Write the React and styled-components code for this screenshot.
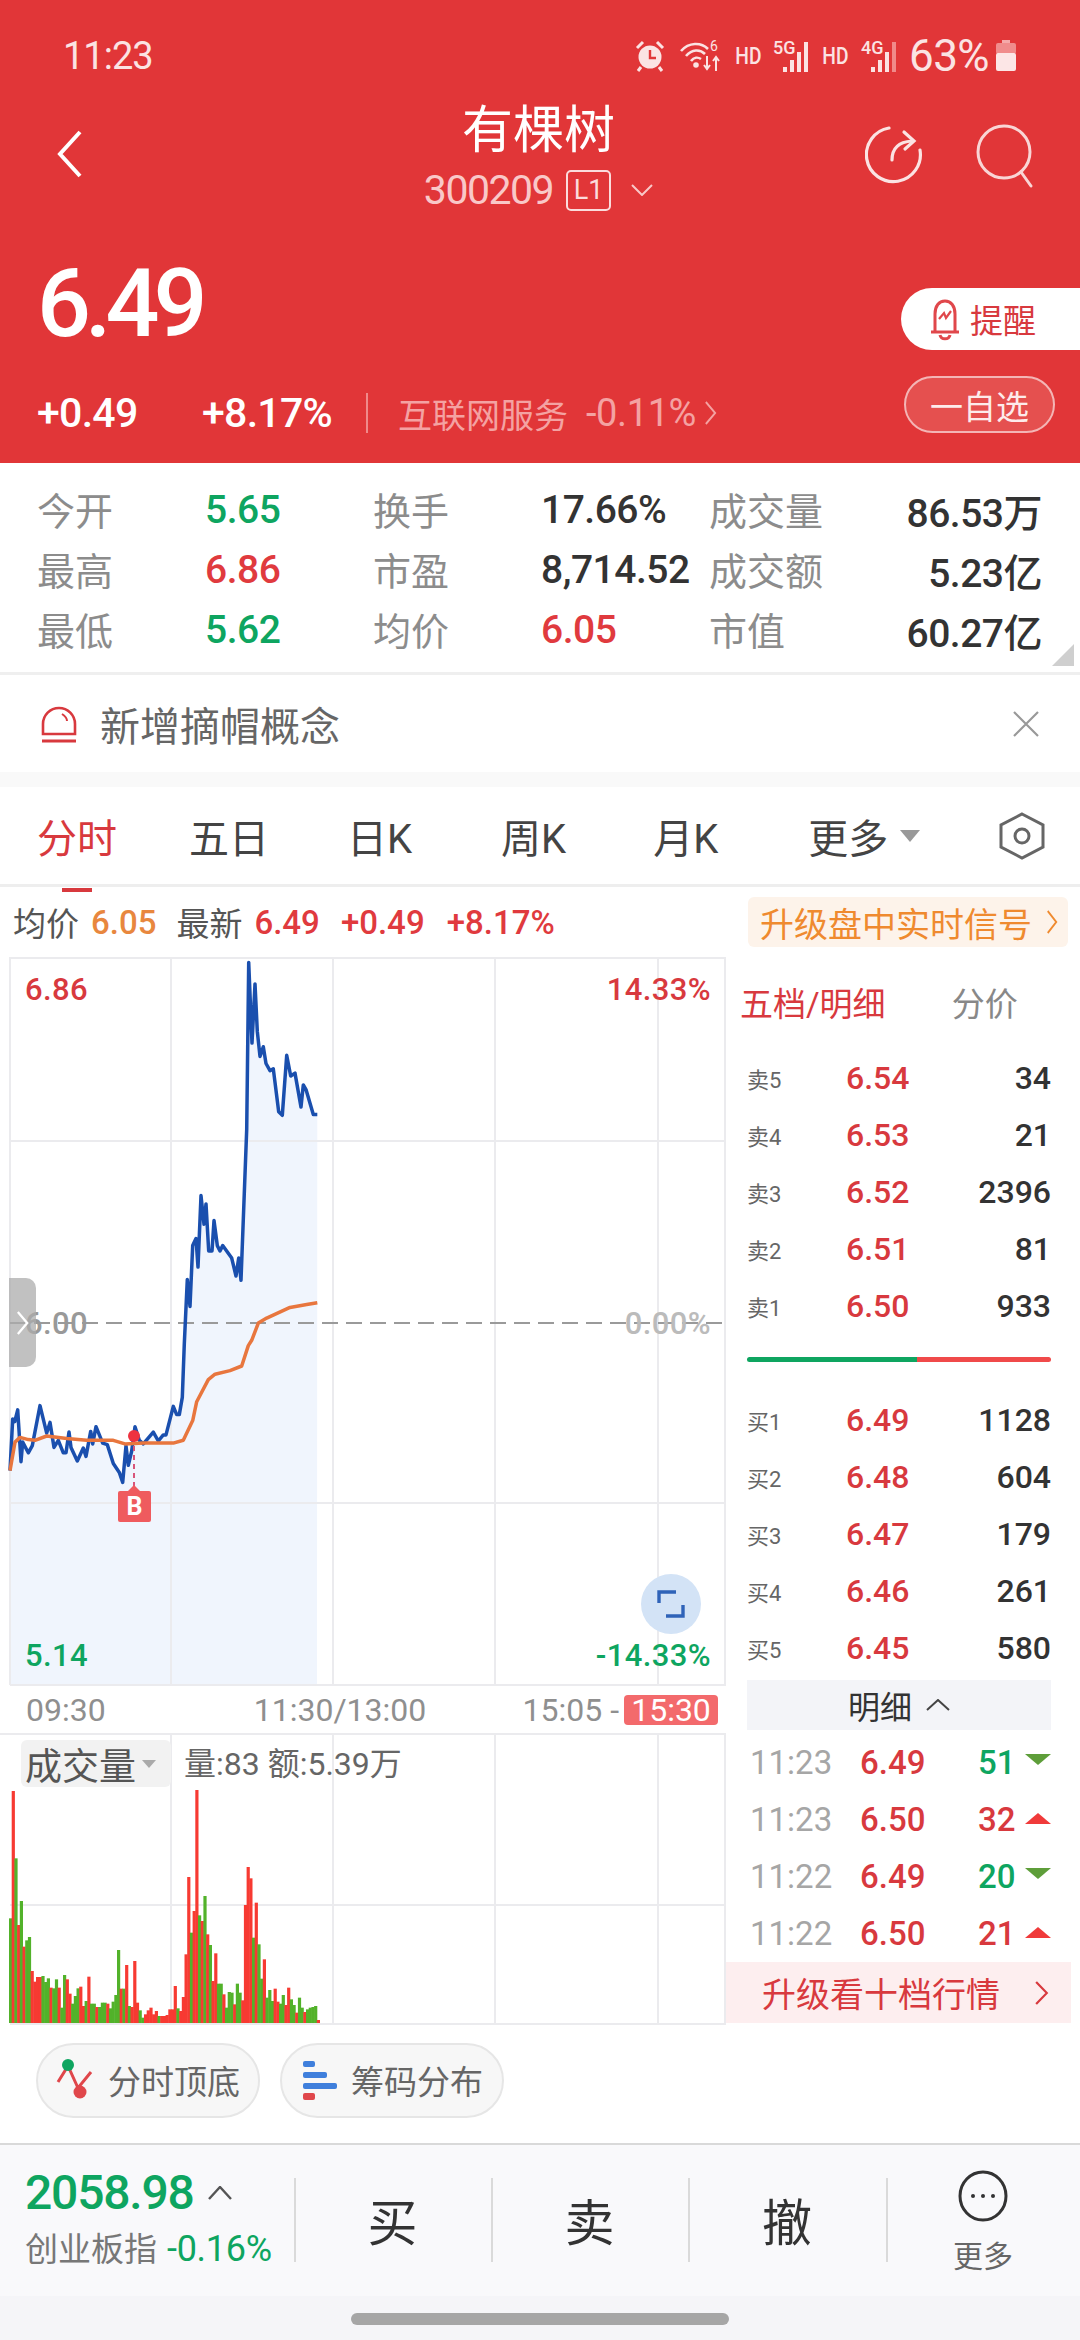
import styled, { createGlobalStyle } from "styled-components";
import { Fragment } from "react";

const RED = "#E03A3E";
const GREEN = "#0EA560";
const FONT = `Roboto, "Noto Sans CJK SC", sans-serif`;

const GlobalStyle = createGlobalStyle`
  html, body { margin: 0; padding: 0; background: #fff; }
  body { width: 1080px; font-family: ${FONT}; }
`;

const Page = styled.div`
  width: 1080px;
  height: 2340px;
  display: flex;
  flex-direction: column;
  overflow: hidden;
  background: #fff;
`;

/* red top part */
const Header = styled.header`
  height: 463px;
  background: #E13638;
  color: #fff;
  display: flex;
  flex-direction: column;
  flex: none;
`;
const StatusBar = styled.div`
  height: 112px;
  display: flex;
  align-items: center;
  padding: 0 63px;
  justify-content: space-between;
  box-sizing: border-box;
  color: #FBE3E3;
`;
const Clock = styled.span`
  font-size: 38px;
  letter-spacing: -1px;
`;
const StatusIcons = styled.div`
  display: flex;
  align-items: center;
`;
const HdMark = styled.span`
  font-size: 24px;
  font-weight: 500;
  margin: 0 9px 0 8px;
  transform: scaleX(.8);
`;
const Battery = styled.span`
  font-size: 44px;
  margin-left: 10px;
  letter-spacing: -.6px;
`;
const NavBar = styled.div`
  height: 103px;
  display: flex;
  align-items: flex-start;
  justify-content: space-between;
  padding: 0 45px 0 56px;
`;
const TitleBlock = styled.div`
  display: flex;
  flex-direction: column;
  align-items: center;
  margin-left: 128px;
`;
const Title = styled.div`
  font-size: 51px;
  line-height: 62px;
  color: #fff;
  margin-top: -12px;
`;
const CodeRow = styled.div`
  display: flex;
  align-items: center;
  margin-top: 6px;
  color: #F9C8C8;
  font-size: 41px;
  line-height: 44px;
  letter-spacing: -1.5px;
`;
const LevelBadge = styled.span`
  font-size: 27px;
  line-height: 37px;
  width: 45px;
  height: 41px;
  box-sizing: border-box;
  border: 2px solid #FBDCDC;
  border-radius: 5px;
  text-align: center;
  margin-left: 13px;
  color: #FBDCDC;
  letter-spacing: 0;
`;
const NavIcons = styled.div`
  display: flex;
  gap: 50px;
  align-items: flex-start;
  margin-top: 12px;
`;
const QuoteRow = styled.div`
  flex: 1;
  display: flex;
  justify-content: space-between;
  position: relative;
`;
const QuoteLeft = styled.div`
  padding-left: 37px;
  display: flex;
  flex-direction: column;
`;
const BigPrice = styled.div`
  font-size: 95px;
  line-height: 90px;
  font-weight: 500;
  letter-spacing: -6px;
  margin-top: 44px;
`;
const ChangeRow = styled.div`
  display: flex;
  align-items: center;
  margin-top: 44px;
  height: 40px;
`;
const Change = styled.span`
  font-size: 41px;
  font-weight: 500;
  letter-spacing: -.7px;
  width: ${(p) => p.$w}px;
`;
const VDivider = styled.span`
  width: 2px;
  height: 40px;
  background: #F08A8A;
  margin-right: 30px;
`;
const Sector = styled.span`
  font-size: 34px;
  color: #F4A2A2;
  display: flex;
  align-items: center;
`;
const SectorPct = styled.span`
  font-size: 38px;
  letter-spacing: -.4px;
  margin: 0 8px 0 18px;
`;
const QuoteRight = styled.div`
  display: flex;
  flex-direction: column;
  align-items: flex-end;
`;
const AlertChip = styled.div`
  width: 179px;
  height: 62px;
  margin-top: 73px;
  background: #fff;
  border-radius: 31px 0 0 31px;
  display: flex;
  align-items: center;
  padding-left: 27px;
  box-sizing: border-box;
  color: #D8393E;
  font-size: 33px;
  gap: 8px;
`;
const WatchChip = styled.div`
  width: 151px;
  height: 57px;
  margin: 26px 25px 0 0;
  box-sizing: border-box;
  border: 2px solid #F4B5B5;
  background: #E5504F;
  border-radius: 29px;
  display: flex;
  align-items: center;
  justify-content: center;
  color: #FDEBEB;
  font-size: 33px;
`;

/* stat table */
const Stats = styled.div`
  height: 212px;
  flex: none;
  box-sizing: border-box;
  padding: 15px 38px 0 37px;
  border-bottom: 3px solid #EFEFEF;
  position: relative;
  display: grid;
  grid-template-columns: 168px 168px 168px 168px 124px 1fr;
  grid-auto-rows: 60px;
  align-items: center;
`;
const StatLabel = styled.span`
  font-size: 38px;
  color: #8C8C8C;
`;
const StatValue = styled.span`
  font-size: 39px;
  font-weight: 500;
  margin-top: 3px;
  color: ${(p) => p.$c || "#333"};
  white-space: nowrap;
  text-align: ${(p) => (p.$right ? "right" : "left")};
  letter-spacing: -.5px;
`;
const Corner = styled.span`
  position: absolute;
  right: 6px;
  bottom: 6px;
  width: 0;
  height: 0;
  border-left: 22px solid transparent;
  border-bottom: 22px solid #CFCFCF;
`;

/* notice line */
const Notice = styled.div`
  height: 97px;
  flex: none;
  display: flex;
  align-items: center;
  padding: 0 41px 0 40px;
  font-size: 40px;
  color: #666;
  gap: 22px;
  border-bottom: 15px solid #F9F9F9;
`;
const NoticeText = styled.span`
  flex: 1;
`;

/* period tabs */
const Tabs = styled.div`
  height: 100px;
  flex: none;
  box-sizing: border-box;
  border-bottom: 3px solid #EEE;
  display: flex;
  align-items: center;
  padding: 0 35px 0 37px;
  position: relative;
`;
const Tab = styled.span`
  font-size: 40px;
  flex: none;
  white-space: nowrap;
  color: ${(p) => (p.$on ? "#D8393E" : "#444")};
  position: relative;
  display: flex;
  align-items: center;
  margin-right: ${(p) => p.$gap || 0}px;
  &::after {
    content: "";
    display: ${(p) => (p.$on ? "block" : "none")};
    position: absolute;
    left: 25px;
    bottom: -27px;
    width: 30px;
    height: 4px;
    background: #D8393E;
  }
`;
const TabArrow = styled.i`
  width: 0;
  height: 0;
  border-left: 10px solid transparent;
  border-right: 10px solid transparent;
  border-top: 12px solid #999;
  margin-left: 12px;
`;
const TabIcon = styled.span`
  margin-left: auto;
  display: flex;
`;

/* line under tabs */
const InfoRow = styled.div`
  height: 70px;
  flex: none;
  display: flex;
  align-items: center;
  padding: 0 12px 0 13px;
  font-size: 33px;
  font-weight: 500;
`;
const InfoLabel = styled.span`
  color: #555;
  font-weight: 400;
  margin-right: 12px;
`;
const InfoValue = styled.span`
  color: ${(p) => p.$c};
  margin-right: ${(p) => p.$gap}px;
`;
const Upgrade = styled.div`
  margin-left: auto;
  height: 50px;
  width: 320px;
  box-sizing: border-box;
  border-radius: 6px;
  background: #FDF3EA;
  color: #EF8A2F;
  font-weight: 400;
  font-size: 34px;
  display: flex;
  align-items: center;
  justify-content: space-between;
  padding: 0 10px 0 12px;
  white-space: nowrap;
`;

/* chart + order book */
const Market = styled.div`
  height: 1068px;
  flex: none;
  display: grid;
  grid-template-columns: 726px 354px;
`;
const ChartColumn = styled.div`
  display: flex;
  flex-direction: column;
`;
const PriceChart = styled.div`
  position: relative;
  height: 730px;
  flex: none;
  svg { display: block; }
`;
const ChartLabel = styled.span`
  position: absolute;
  font-size: 31px;
  line-height: 34px;
  font-weight: 500;
  letter-spacing: .4px;
  color: ${(p) => p.$c};
  top: ${(p) => p.$top}px;
  ${(p) => (p.$right ? "right: 15px;" : "left: 25px;")}
`;
const SideHandle = styled.div`
  position: absolute;
  left: 9px;
  top: 321px;
  width: 27px;
  height: 89px;
  border-radius: 0 10px 10px 0;
  background: rgba(172, 172, 172, .75);
  display: flex;
  align-items: center;
  justify-content: center;
`;
const ExpandButton = styled.div`
  position: absolute;
  left: 641px;
  top: 617px;
  width: 60px;
  height: 60px;
  border-radius: 50%;
  background: #D3E3F6;
  display: flex;
  align-items: center;
  justify-content: center;
`;
const BuyBadge = styled.div`
  position: absolute;
  left: 118px;
  top: 534px;
  width: 33px;
  height: 31px;
  background: #EF5B5E;
  border-radius: 2px;
  color: #fff;
  font-size: 25px;
  font-weight: 700;
  line-height: 32px;
  text-align: center;
  &::before {
    content: "";
    position: absolute;
    left: 10px;
    top: -6px;
    border-left: 6px solid transparent;
    border-right: 6px solid transparent;
    border-bottom: 6px solid #EF5B5E;
  }
`;
const TimeAxis = styled.div`
  height: 46px;
  flex: none;
  display: flex;
  align-items: center;
  font-size: 32px;
  color: #8F8F8F;
  padding-left: 26px;
  box-sizing: border-box;
  position: relative;
`;
const AxisMid = styled.span`
  margin-left: 148px;
`;
const AxisEnd = styled.span`
  margin-left: auto;
  margin-right: 8px;
  display: flex;
  align-items: center;
  gap: 5px;
`;
const CloseBadge = styled.span`
  background: #F36A6C;
  color: #fff;
  border-radius: 4px;
  height: 30px;
  line-height: 30px;
  width: 94px;
  text-align: center;
`;
const VolumeChart = styled.div`
  position: relative;
  height: 292px;
  flex: none;
  svg { display: block; }
`;
const VolumeTag = styled.div`
  position: absolute;
  left: 21px;
  top: 7px;
  width: 150px;
  height: 47px;
  border-radius: 6px;
  background: #F2F2F2;
  color: #555;
  font-size: 37px;
  display: flex;
  align-items: center;
  padding-left: 4px;
  box-sizing: border-box;
  gap: 6px;
`;
const VolumeArrow = styled.i`
  width: 0;
  height: 0;
  border-left: 7px solid transparent;
  border-right: 7px solid transparent;
  border-top: 8px solid #AAA;
`;
const VolumeInfo = styled.div`
  position: absolute;
  left: 184px;
  top: 14px;
  font-size: 32px;
  line-height: 34px;
  color: #666;
  white-space: nowrap;
`;

const Book = styled.div`
  display: flex;
  flex-direction: column;
  position: relative;
`;
const BookHead = styled.div`
  height: 92px;
  flex: none;
  display: flex;
  align-items: center;
  padding: 0 0 3px 14px;
  box-sizing: border-box;
  font-size: 33px;
  gap: 66px;
`;
const BookTab = styled.span`
  color: ${(p) => (p.$on ? "#D8393E" : "#888")};
`;
const BookRow = styled.div`
  height: 57px;
  flex: none;
  display: grid;
  grid-template-columns: 99px 90px 115px;
  margin-left: 21px;
  width: 304px;
  align-items: center;
`;
const BookLabel = styled.span`
  font-size: 22px;
  color: #666;
`;
const BookPrice = styled.span`
  font-size: 32px;
  font-weight: 500;
  color: #D8393E;
`;
const BookQty = styled.span`
  font-size: 32px;
  font-weight: 500;
  color: #333;
  text-align: right;
`;
const RatioBar = styled.div`
  height: 57px;
  flex: none;
  margin-left: 21px;
  width: 304px;
  display: flex;
  padding-top: 23px;
  box-sizing: border-box;
  & > i {
    height: 5px;
    display: block;
  }
`;
const RatioBuy = styled.i`
  width: 170px;
  background: #0EA560;
  border-radius: 3px 0 0 3px;
`;
const RatioSell = styled.i`
  flex: 1;
  background: #F04A4A;
  border-radius: 0 3px 3px 0;
`;
const DetailHead = styled.div`
  height: 50px;
  flex: none;
  margin: 4px 0 4px 21px;
  width: 304px;
  background: #F3F4F8;
  display: flex;
  align-items: center;
  justify-content: center;
  font-size: 32px;
  color: #333;
  gap: 14px;
`;
const DetailRow = styled.div`
  height: 57px;
  flex: none;
  margin-left: 24px;
  width: 301px;
  display: flex;
  align-items: center;
  font-size: 33px;
  font-weight: 500;
  position: relative;
`;
const DetailTime = styled.span`
  width: 110px;
  color: #A6A6A6;
  font-weight: 400;
`;
const DetailPrice = styled.span`
  width: 118px;
  color: #D8393E;
`;
const DetailVol = styled.span`
  color: ${(p) => (p.$up ? "#D8393E" : GREEN)};
`;
const Tick = styled.i`
  position: absolute;
  right: 0;
  width: 0;
  height: 0;
  border-left: 13px solid transparent;
  border-right: 13px solid transparent;
  ${(p) =>
    p.$up
      ? "border-bottom: 11px solid #F03A3A; margin-top: -2px;"
      : "border-top: 11px solid #5E9E3A; margin-top: -6px;"}
`;
const UpgradeStrip = styled.div`
  position: absolute;
  left: 0;
  top: 1005px;
  width: 345px;
  height: 61px;
  background: #FDEEEF;
  color: #D8393E;
  font-size: 34px;
  display: flex;
  align-items: center;
  justify-content: space-between;
  box-sizing: border-box;
  padding: 0 22px 0 36px;
`;

/* round feature chips */
const ChipRow = styled.div`
  height: 120px;
  flex: none;
  box-sizing: border-box;
  border-bottom: 2px solid #D9D9D9;
  display: flex;
  gap: 20px;
  padding: 0 0 8px 36px;
  align-items: center;
`;
const Chip = styled.div`
  width: 224px;
  height: 75px;
  box-sizing: border-box;
  border: 2px solid #E6E6E6;
  border-radius: 38px;
  background: #F7F7F7;
  color: #666;
  font-size: 33px;
  display: flex;
  align-items: center;
  justify-content: center;
  gap: 14px;
`;

/* bottom action bar */
const ActionBar = styled.div`
  height: 151px;
  flex: none;
  background: #F9F9FB;
  display: grid;
  grid-template-columns: 294px 197px 197px 198px 194px;
  box-sizing: border-box;
`;
const IndexBox = styled.div`
  padding: 24px 0 0 25px;
`;
const IndexValue = styled.div`
  font-size: 48px;
  line-height: 48px;
  font-weight: 500;
  color: ${GREEN};
  letter-spacing: -1.2px;
  display: flex;
  align-items: center;
  gap: 14px;
`;
const IndexSub = styled.div`
  font-size: 33px;
  line-height: 40px;
  color: #777;
  margin-top: 12px;
  white-space: nowrap;
`;
const IndexPct = styled.span`
  font-size: 36px;
  color: ${GREEN};
  margin-left: 10px;
  letter-spacing: -.3px;
`;
const ActionCell = styled.div`
  position: relative;
  display: flex;
  align-items: center;
  justify-content: center;
  font-size: 50px;
  color: #333;
  padding-bottom: 4px;
  box-sizing: border-box;
  &::before {
    content: "";
    position: absolute;
    left: 0;
    top: 33px;
    width: 2px;
    height: 84px;
    background: #DADADA;
  }
`;
const MoreCell = styled(ActionCell)`
  flex-direction: column;
  font-size: 30px;
  color: #666;
  gap: 10px;
  padding: 4px 0 0;
`;
const HomeBar = styled.div`
  flex: 1;
  background: #F5F5F8;
  display: flex;
  justify-content: center;
  padding-top: 17px;
  box-sizing: border-box;
`;
const HomePill = styled.div`
  width: 378px;
  height: 12px;
  border-radius: 6px;
  background: #A6A6A6;
`;

/* line data, read off the picture in crop pixels */
const priceLine = [[30,1455],[38,1310],[44,1318],[53,1285],[63,1430],[68,1375],[85,1405],[97,1385],[120,1273],[140,1350],[150,1320],[162,1390],[175,1370],[190,1405],[198,1405],[207,1347],[213,1390],[232,1428],[250,1392],[258,1415],[272,1345],[278,1380],[288,1332],[308,1378],[322,1382],[340,1435],[358,1460],[368,1488],[378,1385],[385,1440],[395,1400],[405,1332],[418,1370],[430,1380],[460,1347],[475,1372],[490,1355],[498,1355],[520,1275],[530,1298],[538,1298],[547,1250],[553,1100],[562,920],[570,995],[578,825],[588,805],[594,885],[603,685],[612,765],[618,708],[626,840],[636,840],[642,755],[652,825],[660,840],[668,825],[695,860],[708,910],[716,860],[723,922],[740,500],[746,32],[756,258],[765,92],[772,225],[780,295],[790,268],[798,315],[810,335],[820,330],[836,450],[847,460],[860,292],[872,350],[885,342],[903,437],[910,375],[918,388],[940,458],[952,458]];
const avgLine = [[30,1455],[45,1375],[60,1362],[85,1368],[105,1370],[140,1358],[200,1365],[260,1370],[340,1370],[375,1380],[430,1378],[520,1378],[550,1370],[578,1315],[590,1262],[625,1200],[645,1185],[690,1175],[725,1162],[745,1105],[755,1090],[775,1042],[800,1028],[870,998],[920,990],[952,985]];
const toPoints = (pts) => pts.map(([x, y]) => `${(x / 3).toFixed(1)},${(y / 2.8 - 6).toFixed(1)}`);

const volumeBars = "g712 r330 g532 r732 g660 r797 g778 g768 r870 r902 r888 r888 g885 g903 g892 r920 g922 g895 r920 g980 g882 r895 r938 g968 g945 g922 r917 r975 g960 r887 g968 g968 r978 g978 g965 g965 r968 g982 g962 g942 g807 r923 g923 r852 g975 r978 r840 r965 g988 g1010 r1000 r988 r980 r1000 r990 g1005 r1005 r1005 r1002 r985 r985 r915 g982 r990 r948 r820 r588 g755 r690 r327 g703 r720 g645 r760 g792 r900 r817 g908 g908 r940 g980 g933 g935 r970 g908 g935 r958 r672 r558 r592 g770 r665 g790 g893 r835 g950 g927 g960 r923 r962 g968 g942 r972 r920 g955 g972 r995 g950 g980 r993 g985 g980 g978 g975 r1017".split(" ");

const sells = [["卖5","6.54","34"],["卖4","6.53","21"],["卖3","6.52","2396"],["卖2","6.51","81"],["卖1","6.50","933"]];
const buys = [["买1","6.49","1128"],["买2","6.48","604"],["买3","6.47","179"],["买4","6.46","261"],["买5","6.45","580"]];
const trades = [["11:23","6.49","51",false],["11:23","6.50","32",true],["11:22","6.49","20",false],["11:22","6.50","21",true]];

const stats = [
  ["今开","5.65",GREEN,"换手","17.66%","#333","成交量","86.53万"],
  ["最高","6.86",RED,"市盈","8,714.52","#333","成交额","5.23亿"],
  ["最低","5.62",GREEN,"均价","6.05",RED,"市值","60.27亿"],
];

const Chevron = ({ w = 14, h = 24, color = "#fff", sw = 2.5, dir = "right" }) => (
  <svg width={w} height={h} viewBox="0 0 14 24" preserveAspectRatio="none" fill="none" stroke={color} strokeWidth={sw}>
    <path d={dir === "right" ? "M2 1 L12 12 L2 23" : "M12 1 L2 12 L12 23"} />
  </svg>
);

const Signal = ({ label }) => (
  <svg width="38" height="36" viewBox="0 0 38 36" style={{ overflow: "visible" }}>
    <text x="0" y="16" fontSize="18" fontWeight="500" fill="#FBE3E3" fontFamily="Roboto">{label}</text>
    <rect x="10" y="29" width="4" height="5" fill="#FBE3E3" />
    <rect x="17" y="22" width="4" height="12" fill="#FBE3E3" />
    <rect x="24" y="14" width="4" height="20" fill="#FBE3E3" />
    <rect x="31" y="4" width="4" height="30" fill={label === "4G" ? "#F08A8A" : "#FBE3E3"} />
  </svg>
);

export default function App() {
  return (
    <Page>
      <GlobalStyle />
      <Header>
        <StatusBar>
          <Clock>11:23</Clock>
          <StatusIcons>
            <svg width="30" height="32" viewBox="0 0 30 32">
              <circle cx="15" cy="17" r="11.5" fill="#FBE3E3" />
              <path d="M15 10v8h6" stroke="#E13638" strokeWidth="2.4" fill="none" />
              <path d="M2 8 L8 2 M28 8 L22 2" stroke="#FBE3E3" strokeWidth="3" />
              <path d="M6 27 L3 31 M24 27 L27 31" stroke="#FBE3E3" strokeWidth="3" />
            </svg>
            <svg width="44" height="34" viewBox="0 0 44 34" style={{ marginLeft: 15 }} fill="none" stroke="#FBE3E3" strokeWidth="2.6">
              <path d="M1 12 C9 3 21 3 28 10" />
              <path d="M6 17 C12 10 20 10 25 15" />
              <path d="M11 22 C14 18 18 18 21 20" />
              <circle cx="16" cy="26" r="1.5" fill="#FBE3E3" />
              <path d="M27 17v13M24 26l3 4 3-4M36 32V19M33 22l3-4 3 4" strokeWidth="2" />
              <text x="30" y="12" fontSize="14" fill="#FBE3E3" stroke="none" fontFamily="Roboto">6</text>
            </svg>
            <HdMark>HD</HdMark>
            <Signal label="5G" />
            <HdMark>HD</HdMark>
            <Signal label="4G" />
            <Battery>63%</Battery>
            <svg width="22" height="32" viewBox="0 0 22 32" style={{ marginLeft: 6 }}>
              <rect x="7" y="0" width="8" height="3" fill="#F5A9A9" />
              <rect x="1" y="3" width="20" height="11" rx="2" fill="#F08C8C" />
              <rect x="1" y="13" width="20" height="18" rx="2" fill="#FCE6E6" />
            </svg>
          </StatusIcons>
        </StatusBar>
        <NavBar>
          <span style={{ display: "flex", marginTop: 18 }}><Chevron w={28} h={48} dir="left" sw={2} /></span>
          <TitleBlock>
            <Title>有棵树</Title>
            <CodeRow>
              300209
              <LevelBadge>L1</LevelBadge>
              <svg width="22" height="12" viewBox="0 0 22 12" fill="none" stroke="#F9C8C8" strokeWidth="2" style={{ marginLeft: 20 }}>
                <path d="M1 1 L11 11 L21 1" />
              </svg>
            </CodeRow>
          </TitleBlock>
          <NavIcons>
            <svg width="60" height="62" viewBox="0 0 60 62" fill="none" stroke="#FBE3E3" strokeWidth="3.2" strokeLinecap="round">
              <path d="M24 4 A27 27 0 1 0 55 26" />
              <path d="M27 36 C27 25 33 18 47 17" />
              <path d="M39 8 L49 17 L40 25" />
            </svg>
            <svg width="60" height="64" viewBox="0 0 60 64" fill="none" stroke="#F9D5D5" strokeWidth="3" strokeLinecap="round">
              <circle cx="29" cy="28" r="26" />
              <path d="M46 48 L56 62" />
            </svg>
          </NavIcons>
        </NavBar>
        <QuoteRow>
          <QuoteLeft>
            <BigPrice>6.49</BigPrice>
            <ChangeRow>
              <Change $w={165}>+0.49</Change>
              <Change $w={164}>+8.17%</Change>
              <VDivider />
              <Sector>
                互联网服务
                <SectorPct>-0.11%</SectorPct>
                <Chevron w={13} h={24} color="#F4A2A2" sw={2} />
              </Sector>
            </ChangeRow>
          </QuoteLeft>
          <QuoteRight>
            <AlertChip>
              <svg width="34" height="44" viewBox="0 0 34 44" fill="none" stroke="#E0474B" strokeWidth="3">
                <path d="M7 34 V17 C7 9 11 4 17 4 C23 4 27 9 27 17 V34" />
                <path d="M3 35 H31" />
                <path d="M12 38 C13 43 21 43 22 38" />
                <path d="M11 22 L16 16 L18 21 L23 14" strokeWidth="2.2" />
              </svg>
              提醒
            </AlertChip>
            <WatchChip>一自选</WatchChip>
          </QuoteRight>
        </QuoteRow>
      </Header>

      <Stats>
        {stats.map((r) => (
          <Fragment key={r[0]}>
            <StatLabel>{r[0]}</StatLabel>
            <StatValue $c={r[2]}>{r[1]}</StatValue>
            <StatLabel>{r[3]}</StatLabel>
            <StatValue $c={r[5]}>{r[4]}</StatValue>
            <StatLabel>{r[6]}</StatLabel>
            <StatValue $right>{r[7]}</StatValue>
          </Fragment>
        ))}
        <Corner />
      </Stats>

      <Notice>
        <svg width="38" height="38" viewBox="0 0 38 38" fill="none" stroke="#D8393E" strokeWidth="2.6">
          <path d="M3 29 V19 A16 16 0 0 1 35 19 V29 Z" />
          <path d="M2 36 H36" strokeWidth="3" />
          <path d="M22 9 C25 11 27 13 27 16" strokeWidth="2" />
        </svg>
        <NoticeText>新增摘帽概念</NoticeText>
        <svg width="26" height="26" viewBox="0 0 26 26" stroke="#999" strokeWidth="2.2">
          <path d="M1 1 L25 25 M25 1 L1 25" />
        </svg>
      </Notice>

      <Tabs>
        <Tab $on $gap={72}>分时</Tab>
        <Tab $gap={78}>五日</Tab>
        <Tab $gap={89}>日K</Tab>
        <Tab $gap={87}>周K</Tab>
        <Tab $gap={90}>月K</Tab>
        <Tab>更多<TabArrow /></Tab>
        <TabIcon>
          <svg width="46" height="48" viewBox="0 0 46 48" fill="none" stroke="#666" strokeWidth="3">
            <path d="M23 2 L44 13 V35 L23 46 L2 35 V13 Z" />
            <circle cx="23" cy="24" r="7" />
          </svg>
        </TabIcon>
      </Tabs>

      <InfoRow>
        <InfoLabel>均价</InfoLabel>
        <InfoValue $c="#E8873E" $gap={20}>6.05</InfoValue>
        <InfoLabel>最新</InfoLabel>
        <InfoValue $c={RED} $gap={21}>6.49</InfoValue>
        <InfoValue $c={RED} $gap={22}>+0.49</InfoValue>
        <InfoValue $c={RED} $gap={0}>+8.17%</InfoValue>
        <Upgrade>升级盘中实时信号<Chevron w={12} h={24} color="#EF8A2F" sw={2} /></Upgrade>
      </InfoRow>

      <Market>
        <ChartColumn>
          <PriceChart>
            <svg width="726" height="730" viewBox="0 0 726 730">
              <polygon fill="#F0F5FD" points={`10,728 ${toPoints(priceLine).join(" ")} 317,728`} />
              <g stroke="#EBEBEE" strokeWidth="2" fill="none">
                <path d="M10 1 H726 M10 184 H726 M10 546 H726 M10 728 H726" />
                <path d="M10 0 V728 M171 0 V728 M333 0 V728 M495 0 V728 M658 0 V728 M725 0 V728" />
              </g>
              <path d="M10 366 H726" stroke="#9A9A9A" strokeWidth="2" strokeDasharray="16 8" />
              <polyline points={toPoints(priceLine).join(" ")} fill="none" stroke="#1A4FAE" strokeWidth="3.5" strokeLinejoin="round" />
              <polyline points={toPoints(avgLine).join(" ")} fill="none" stroke="#E8763E" strokeWidth="3.5" strokeLinejoin="round" />
              <path d="M134 480 V530" stroke="#D8557A" strokeWidth="2" strokeDasharray="5 4" />
              <circle cx="134" cy="479" r="6" fill="#EE3340" />
            </svg>
            <ChartLabel $c="#D8393E" $top={16}>6.86</ChartLabel>
            <ChartLabel $c="#D8393E" $top={16} $right>14.33%</ChartLabel>
            <ChartLabel $c="#999" $top={350}>6.00</ChartLabel>
            <ChartLabel $c="#BBB" $top={350} $right>0.00%</ChartLabel>
            <ChartLabel $c={GREEN} $top={682}>5.14</ChartLabel>
            <ChartLabel $c={GREEN} $top={682} $right>-14.33%</ChartLabel>
            <SideHandle><Chevron w={13} h={24} sw={2.5} /></SideHandle>
            <BuyBadge>B</BuyBadge>
            <ExpandButton>
              <svg width="30" height="30" viewBox="0 0 30 30" fill="none" stroke="#2F63B8" strokeWidth="3.4">
                <path d="M3 14 V3 H20" />
                <path d="M27 16 V27 H10" />
              </svg>
            </ExpandButton>
          </PriceChart>
          <TimeAxis>
            <span>09:30</span>
            <AxisMid>11:30/13:00</AxisMid>
            <AxisEnd>15:05 -<CloseBadge>15:30</CloseBadge></AxisEnd>
          </TimeAxis>
          <VolumeChart>
            <svg width="726" height="292" viewBox="0 0 726 292">
              <g stroke="#EBEBEE" strokeWidth="2" fill="none">
                <path d="M0 1 H726 M10 172 H726 M10 291 H726" />
                <path d="M171 0 V291 M333 0 V291 M495 0 V291 M658 0 V291 M725 0 V291" />
              </g>
              {volumeBars.map((b, i) => {
                const top = Number(b.slice(1)) / 3 - 52;
                return (
                  <rect key={i} x={9 + i * 2.7} y={top} width="3.2" height={290 - top}
                    fill={b[0] === "r" ? "#F73A32" : "#52B22A"} />
                );
              })}
            </svg>
            <VolumeTag>
              成交量
              <VolumeArrow />
            </VolumeTag>
            <VolumeInfo>量:83 额:5.39万</VolumeInfo>
          </VolumeChart>
        </ChartColumn>

        <Book>
          <BookHead>
            <BookTab $on>五档/明细</BookTab>
            <BookTab>分价</BookTab>
          </BookHead>
          {sells.map((r) => (
            <BookRow key={r[0]}>
              <BookLabel>{r[0]}</BookLabel>
              <BookPrice>{r[1]}</BookPrice>
              <BookQty>{r[2]}</BookQty>
            </BookRow>
          ))}
          <RatioBar><RatioBuy /><RatioSell /></RatioBar>
          {buys.map((r) => (
            <BookRow key={r[0]}>
              <BookLabel>{r[0]}</BookLabel>
              <BookPrice>{r[1]}</BookPrice>
              <BookQty>{r[2]}</BookQty>
            </BookRow>
          ))}
          <DetailHead>
            明细
            <svg width="24" height="12" viewBox="0 0 24 12" fill="none" stroke="#444" strokeWidth="2">
              <path d="M1 11 L12 1 L23 11" />
            </svg>
          </DetailHead>
          {trades.map((t, i) => (
            <DetailRow key={i}>
              <DetailTime>{t[0]}</DetailTime>
              <DetailPrice>{t[1]}</DetailPrice>
              <DetailVol $up={t[3]}>{t[2]}</DetailVol>
              <Tick $up={t[3]} />
            </DetailRow>
          ))}
          <UpgradeStrip>升级看十档行情<Chevron w={15} h={24} color="#D8393E" sw={2} /></UpgradeStrip>
        </Book>
      </Market>

      <ChipRow>
        <Chip>
          <svg width="38" height="44" viewBox="0 0 38 44" fill="none">
            <path d="M2 24 L12 8 L22 30 L35 14" stroke="#E0474B" strokeWidth="3" />
            <circle cx="12" cy="7" r="6" fill="#0EA560" />
            <circle cx="24" cy="34" r="6.5" fill="#E0474B" />
          </svg>
          分时顶底
        </Chip>
        <Chip>
          <svg width="36" height="44" viewBox="0 0 36 44">
            <rect x="2" y="3" width="12" height="6" rx="2" fill="#3F7FDC" />
            <rect x="2" y="14" width="24" height="6" rx="2" fill="#3F7FDC" />
            <rect x="2" y="25" width="34" height="6" rx="2" fill="#3F7FDC" />
            <rect x="2" y="35" width="12" height="7" rx="2" fill="#E0474B" />
          </svg>
          筹码分布
        </Chip>
      </ChipRow>

      <ActionBar>
        <IndexBox>
          <IndexValue>
            2058.98
            <svg width="24" height="14" viewBox="0 0 24 14" fill="none" stroke="#555" strokeWidth="2.4">
              <path d="M1 13 L12 1 L23 13" />
            </svg>
          </IndexValue>
          <IndexSub>创业板指<IndexPct>-0.16%</IndexPct></IndexSub>
        </IndexBox>
        <ActionCell>买</ActionCell>
        <ActionCell>卖</ActionCell>
        <ActionCell>撤</ActionCell>
        <MoreCell>
          <svg width="50" height="52" viewBox="0 0 50 52" fill="none" stroke="#333" strokeWidth="3">
            <ellipse cx="25" cy="26" rx="23" ry="24" />
            <circle cx="15" cy="26" r="2" fill="#333" stroke="none" />
            <circle cx="25" cy="26" r="2" fill="#333" stroke="none" />
            <circle cx="35" cy="26" r="2" fill="#333" stroke="none" />
          </svg>
          更多
        </MoreCell>
      </ActionBar>
      <HomeBar><HomePill /></HomeBar>
    </Page>
  );
}
